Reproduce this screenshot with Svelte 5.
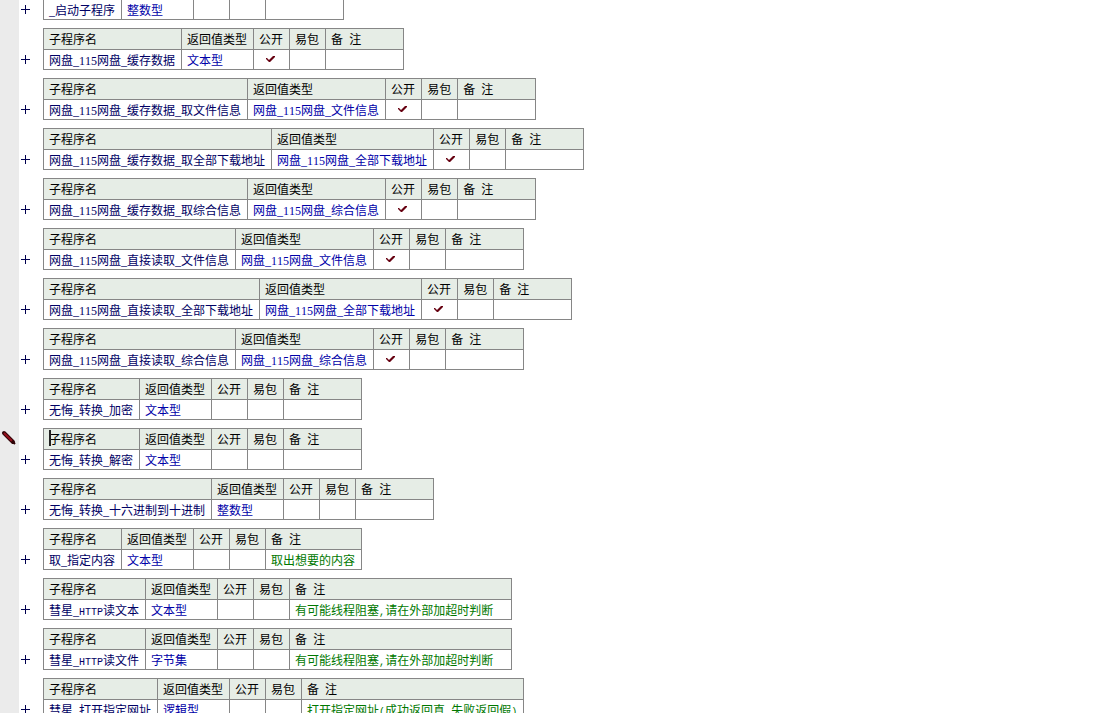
<script>
  const headings = ['子程序名', '返回值类型', '公开', '易包', '备 注'];

  // the first entry is scrolled so that only its body row shows
  let routines = $state([
    { name: '_启动子程序', type: '整数型', headless: true },
    { name: '网盘_115网盘_缓存数据', type: '文本型', open: true },
    { name: '网盘_115网盘_缓存数据_取文件信息', type: '网盘_115网盘_文件信息', open: true },
    { name: '网盘_115网盘_缓存数据_取全部下载地址', type: '网盘_115网盘_全部下载地址', open: true },
    { name: '网盘_115网盘_缓存数据_取综合信息', type: '网盘_115网盘_综合信息', open: true },
    { name: '网盘_115网盘_直接读取_文件信息', type: '网盘_115网盘_文件信息', open: true },
    { name: '网盘_115网盘_直接读取_全部下载地址', type: '网盘_115网盘_全部下载地址', open: true },
    { name: '网盘_115网盘_直接读取_综合信息', type: '网盘_115网盘_综合信息', open: true },
    { name: '无悔_转换_加密', type: '文本型' },
    { name: '无悔_转换_解密', type: '文本型', current: true },
    { name: '无悔_转换_十六进制到十进制', type: '整数型' },
    { name: '取_指定内容', type: '文本型', remark: '取出想要的内容' },
    { name: '彗星_HTTP读文本', type: '文本型', remark: '有可能线程阻塞,请在外部加超时判断', wide: true },
    { name: '彗星_HTTP读文件', type: '字节集', remark: '有可能线程阻塞,请在外部加超时判断', wide: true },
    { name: '彗星_打开指定网址', type: '逻辑型', remark: '打开指定网址(成功返回真,失败返回假)', wide: true }
  ]);

  // half-width characters get their own run, half as wide as a hanzi
  const runs = (text = '') => text.split(/([_0-9]+|[\x20-\x2f\x3a-\x5e\x60-\x7e]+)/).filter(Boolean);
  const isDigit = (run) => /^[_0-9]/.test(run);
  const isLatin = (run) => /^[\x20-\x7e]/.test(run);
</script>

{#snippet mixed(text)}{#each runs(text) as run}{#if isDigit(run)}<span class="digit">{run}</span>{:else if isLatin(run)}<span class="latin">{run}</span>{:else}{run}{/if}{/each}{/snippet}

<main class="editor">
  {#each routines as routine}
    <section class="routine">
      <div class="gutter">
        {#if routine.current}
          <svg class="pen" width="16" height="16" viewBox="0 0 16 16" aria-hidden="true">
            <path d="M3 3 L12 12" stroke="#300408" stroke-width="4" stroke-linecap="round" />
            <path d="M3 3 L11 11" stroke="#96101c" stroke-width="2" />
            <path d="M11 11 L14 14" stroke="#300408" stroke-width="2" />
          </svg>
        {/if}
      </div>
      <button class="expand" aria-label="展开">
        <svg width="9" height="9" viewBox="0 0 9 9" shape-rendering="crispEdges">
          <path d="M0 4h9v1H0zM4 0h1v9H4z" fill="#000050" />
        </svg>
      </button>
      <div class="sheet">
        {#if routine.current}<i class="caret"></i>{/if}
        <table class:headless={routine.headless}>
          {#if !routine.headless}
            <thead>
              <tr>
                {#each headings as heading}
                  <th scope="col">{@render mixed(heading)}</th>
                {/each}
              </tr>
            </thead>
          {/if}
          <tbody>
            <tr>
              <td class="name">{@render mixed(routine.name)}</td>
              <td class="type">{@render mixed(routine.type)}</td>
              <td class="flag">
                {#if routine.open}
                  <svg width="9" height="7" viewBox="0 0 9 7" aria-hidden="true">
                    <path d="M0 2 L1 2 L3 4 L7 0 L9 0 L9 1 L4 6 L3 6 L0 3 Z" fill="#660010" />
                  </svg>
                {/if}
              </td>
              <td class="flag"></td>
              <td class="remark" class:wide={routine.wide}>{@render mixed(routine.remark)}</td>
            </tr>
          </tbody>
        </table>
      </div>
    </section>
  {/each}
</main>

<style>
  :global(body) {
    background: #fff;
    overflow: hidden;
  }

  .editor {
    height: 100vh;
    overflow: hidden;
    font-family: "Noto Sans CJK SC", "Liberation Sans", sans-serif;
    font-size: 12px;
    line-height: 18px;
    color: #000;
  }

  .latin {
    font-family: "Liberation Mono", monospace;
    font-size: 10px;
    line-height: 1;
    white-space: pre;
  }

  .digit {
    font-family: "Liberation Serif", serif;
    font-kerning: none;
    line-height: 1;
  }

  .routine {
    display: grid;
    grid-template-columns: 19px 24px 1fr;
  }

  .gutter {
    background: #ebebeb;
  }

  .pen {
    display: block;
    margin: 2px 0 0 1px;
  }

  .expand {
    align-self: end;
    height: 20px;
    margin: 0 0 8px;
    padding: 0 0 2px 2px;
    border: 0;
    background: none;
    display: flex;
    align-items: center;
    cursor: pointer;
  }

  .sheet {
    position: relative;
    padding-bottom: 8px;
  }

  .caret {
    position: absolute;
    left: 6px;
    top: 2px;
    width: 2px;
    height: 16px;
    background: #222;
  }

  table {
    border-collapse: separate;
    border-spacing: 0;
    border-left: 1px solid #868686;
    border-top: 1px solid #868686;
  }

  table.headless {
    border-top: 0;
  }

  th,
  td {
    box-sizing: border-box;
    height: 20px;
    padding: 0 6px 0 5px;
    border-right: 1px solid #868686;
    border-bottom: 1px solid #868686;
    font-weight: normal;
    text-align: left;
    white-space: nowrap;
  }

  th {
    height: 21px;
    background: #e6ede6;
  }

  .name {
    color: #000064;
  }

  .type {
    min-width: 72px;
    color: #0000a8;
  }

  .flag {
    min-width: 36px;
    padding: 0 2px 0 0;
  }

  .flag svg {
    display: block;
    margin: 0 auto;
  }

  .remark {
    min-width: 78px;
    color: #007800;
  }

  .remark.wide {
    min-width: 222px;
  }
</style>
